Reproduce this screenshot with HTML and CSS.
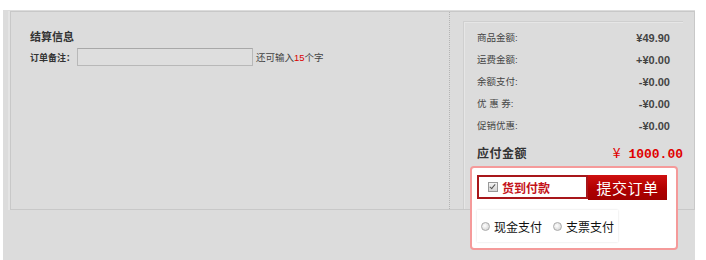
FILE: index.html
```html
<!DOCTYPE html>
<html lang="zh-CN">
<head>
  <meta charset="UTF-8">
  <title>结算信息</title>
  <link rel="stylesheet" href="styles.css">
</head>
<body>

  <div class="page">
    <div class="settle">
      <div class="info">
        <h3>结算信息</h3>
        <div class="remark">
          <label for="remark">订单备注：</label>
          <input type="text" id="remark">
          <span class="tip">还可输入<em>15</em>个字</span>
        </div>
      </div>

      <div class="summary">
        <div class="summary-box">
          <div class="row"><span>商品金额:</span><span class="num">¥49.90</span></div>
          <div class="row"><span>运费金额:</span><span class="num">+¥0.00</span></div>
          <div class="row"><span>余额支付:</span><span class="num">-¥0.00</span></div>
          <div class="row"><span>优 惠 券:</span><span class="num">-¥0.00</span></div>
          <div class="row"><span>促销优惠:</span><span class="num">-¥0.00</span></div>
          <div class="total">
            <span class="total-label">应付金额</span>
            <span class="total-value"><b class="yen">¥</b> 1000.00</span>
          </div>
        </div>
      </div>
    </div>

    <!-- 付款弹层 -->
    <div class="pay-pop">
      <div class="pay-top">
        <div class="cod"><span class="check"></span>货到付款</div>
        <button type="button" class="submit">提交订单</button>
      </div>
      <div class="pay-options">
        <span class="radio"></span>现金支付
        <span class="radio second"></span>支票支付
      </div>
    </div>
  </div>

</body>
</html>
```

FILE: styles.css
```css
:root {
  --gris: #dcdcdc;
  --borde: #c8c8c8;
  --rojo: #e00000;
  --rojo-oscuro: #a8161a;
}

body {
  margin: 0;
  background: #fff;
  font-family: "Liberation Sans", "Noto Sans CJK SC", sans-serif;
  color: #333;
}

.page {
  position: relative;
  margin: 10px 0 0 3px;
  width: 692px;
  height: 250px;
  padding: 1px 0 0 7px;
  box-sizing: border-box;
  background: var(--gris);
}

.settle {
  display: flex;
  width: 685px;
  height: 199px;
  box-sizing: border-box;
  border: 1px solid var(--borde);
  box-shadow: -2px 0 0 #e4e4e4;
}

.info {
  width: 419px;
  padding: 18px 0 0 19px;
  border-right: 1px dotted #b4b4b4;
}

.info h3 {
  margin: 0 0 4px;
  font-size: 11px;
  line-height: 14px;
  color: #333;
}

.remark {
  display: flex;
  align-items: center;
  font-size: 9.5px;
}

.remark label {
  flex-shrink: 0;
  width: 47px;
  white-space: nowrap;
  font-size: 9px;
  font-weight: bold;
}

.remark input {
  flex-shrink: 0;
  width: 176px;
  height: 18px;
  box-sizing: border-box;
  margin: 0 3px 0 0;
  border: 1px solid #b8b8b8;
  border-top-color: #a8a8a8;
  background: #dedede;
}

.tip {
  white-space: nowrap;
  color: #444;
}

.tip em {
  font-style: normal;
  color: #d00;
}

.summary {
  flex: 1;
  padding: 9px 11px 0 13px;
}

.summary-box {
  height: 100%;
  box-sizing: border-box;
  padding: 5px 13px 0 13px;
  border-top: 1px solid #cfcfcf;
  border-left: 1px solid #cfcfcf;
  box-shadow: inset 1px 1px 0 #e6e6e6;
}

.row {
  display: flex;
  justify-content: space-between;
  height: 22px;
  line-height: 22px;
  font-size: 9.5px;
  color: #444;
}

.row .num {
  font-weight: bold;
  font-size: 11px;
  color: #444;
}

.total {
  display: flex;
  justify-content: space-between;
  align-items: center;
  margin-top: 4px;
  height: 22px;
}

.total-label {
  font-size: 12px;
  font-weight: bold;
  color: #333;
  letter-spacing: 0.5px;
}

.total-value {
  margin-right: -13px;
  font-family: "Liberation Mono", monospace;
  font-weight: bold;
  font-size: 13px;
  color: var(--rojo);
}

.total-value .yen {
  font-family: "Noto Sans CJK SC", sans-serif;
  font-weight: normal;
  font-size: 14px;
}

.pay-pop {
  position: absolute;
  left: 467px;
  top: 156px;
  width: 208px;
  height: 84px;
  box-sizing: border-box;
  padding: 7px 0 0 5px;
  border: 2px solid #f59a9a;
  border-radius: 4px;
  background: #fff;
}

.pay-top {
  display: flex;
}

.cod {
  display: flex;
  align-items: center;
  width: 111px;
  height: 24px;
  box-sizing: border-box;
  padding-left: 9px;
  border: 2px solid var(--rojo-oscuro);
  font-size: 12px;
  font-weight: bold;
  color: #c4121a;
  font-family: "Noto Sans CJK SC", sans-serif;
}

.check {
  width: 8px;
  height: 8px;
  margin-right: 4px;
  border: 1px solid #999;
  background: linear-gradient(#f4f4f4, #d4d4d4);
  position: relative;
}

.check::after {
  content: "";
  position: absolute;
  left: 2px;
  top: 0;
  width: 2px;
  height: 5px;
  border: solid #555;
  border-width: 0 1px 1px 0;
  transform: rotate(40deg);
}

.submit {
  width: 79px;
  height: 25px;
  margin: 0;
  padding: 0;
  border: none;
  background: linear-gradient(#cf1010, #b00000 55%, #a00000);
  color: #fff;
  font-family: "Noto Sans CJK SC", sans-serif;
  font-size: 15px;
  letter-spacing: 0.5px;
  cursor: pointer;
}

.pay-options {
  display: flex;
  align-items: center;
  width: 141px;
  height: 32px;
  box-sizing: border-box;
  margin-top: 10px;
  padding-left: 4px;
  background: #fff;
  box-shadow: 0 0 2px #ddd;
  font-family: "Noto Sans CJK SC", sans-serif;
  font-size: 12px;
  color: #111;
}

.radio {
  width: 7px;
  height: 7px;
  margin-right: 4px;
  border: 1px solid #aaa;
  border-radius: 50%;
  background: radial-gradient(circle at 40% 40%, #fff, #ccc);
}

.radio.second {
  margin-left: 11px;
}
```
